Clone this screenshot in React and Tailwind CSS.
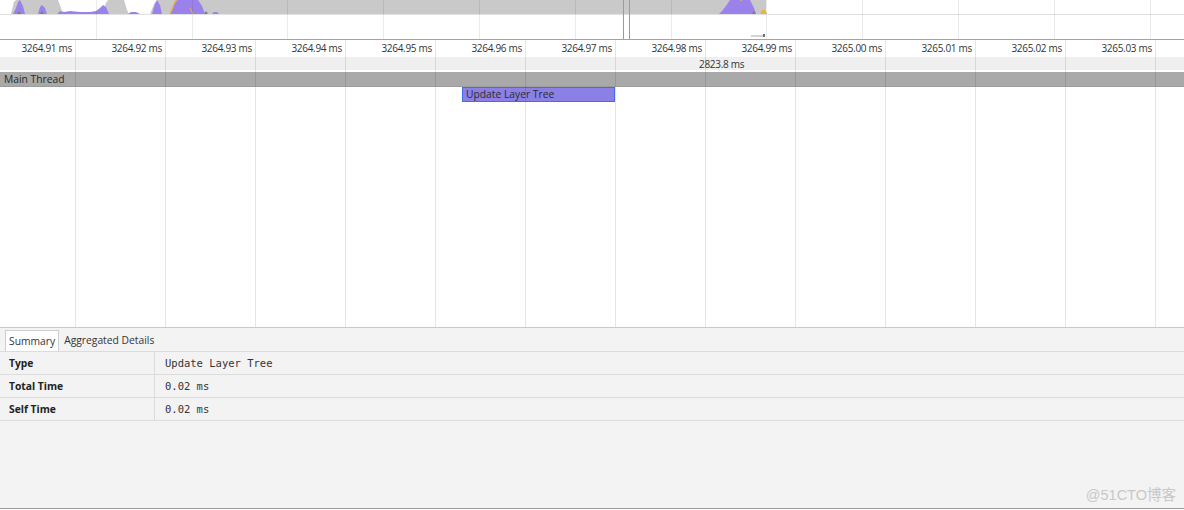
import React from "react";

const rulerLabels = [
  "3264.91 ms", "3264.92 ms", "3264.93 ms", "3264.94 ms", "3264.95 ms",
  "3264.96 ms", "3264.97 ms", "3264.98 ms", "3264.99 ms", "3265.00 ms",
  "3265.01 ms", "3265.02 ms", "3265.03 ms",
];

function Overview() {
  const ov = [];
  for (let k = 1; k <= 12; k++) ov.push(95.8 * k);
  return (
    <svg width="1184" height="39" viewBox="0 0 1184 39" className="block">
      <rect x="0" y="0" width="1184" height="39" fill="#ffffff" />
      {/* grey cpu area */}
      <path d="M11 14 L14 2 L16 0 L58 0 L61 8 L63 14 Z" fill="#c9c9c9" />
      <path d="M102 14 L106 3 L108 0 L124 0 L127 10 L129 14 Z" fill="#c9c9c9" />
      <path d="M150 14 L154 4 L157 0 L766 0 L766 14 Z" fill="#c9c9c9" />
      {/* purple peaks */}
      <path d="M13 14 L16 8 L18 2 L20 0 L23 6 L25 14 Z" fill="#9b82ea" />
      <path d="M38 14 L40 7 L42 5 L45 8 L47 14 Z" fill="#9b82ea" />
      <path d="M57 14 L60 11 L64 12 L70 11 L80 12 L90 12 L96 11 L100 8 L103 5 L106 7 L109 14 Z" fill="#9b82ea" />
      <path d="M128 14 L131 12 L136 12 L140 14 Z" fill="#9b82ea" />
      <path d="M152 14 L155 4 L157 0 L160 5 L162 14 Z" fill="#9b82ea" />
      <path d="M170 14 L173 6 L176 0 L198 0 L202 6 L205 14 Z" fill="#9b82ea" />
      <path d="M212 14 L214 12 L217 12 L219 14 Z" fill="#9b82ea" />
      <path d="M719 14 L722 11 L726 6 L730 0 L750 0 L754 8 L756 14 Z" fill="#9b82ea" />
      {/* orange traces */}
      <path d="M170 14 L176 0" stroke="#e8b43c" strokeWidth="1.2" fill="none" />
      <path d="M174 3 L178 0" stroke="#e8b43c" strokeWidth="1" fill="none" />
      <path d="M190 8 L193 14" stroke="#e8b43c" strokeWidth="1" fill="none" />
      <path d="M740 0 L742 1" stroke="#e8b43c" strokeWidth="1" fill="none" />
      <path d="M760 14 L762 10 L765 10 L767 14 Z" fill="#e8b43c" />
      {/* dark ticks at peaks */}
      <path d="M17 14 L19 11 L21 14 Z" fill="#7d7d7d" />
      <path d="M40 14 L42 11 L44 14 Z" fill="#7d7d7d" />
      <path d="M204 14 L206 11 L208 14 Z" fill="#7d7d7d" />
      <path d="M752 14 L754 11 L756 14 Z" fill="#7d7d7d" />
      {/* baseline */}
      <rect x="0" y="14" width="1184" height="1" fill="#e2e2e2" />
      {/* overview grid */}
      {ov.map((x) => (
        <rect key={x} x={Math.round(x)} y="0" width="1" height="39" fill="#000" fillOpacity="0.08" />
      ))}
      {/* selection window edges */}
      <rect x="623" y="0" width="1" height="39" fill="#9a9a9a" />
      <rect x="629" y="0" width="1" height="39" fill="#9a9a9a" />
      {/* resize handle */}
      <rect x="751" y="35" width="12" height="2" fill="#d4d4d4" />
      <rect x="763" y="34" width="2" height="3" fill="#6e6e6e" />
    </svg>
  );
}

function Timeline() {
  const lines = [];
  for (let i = 0; i < 13; i++) lines.push(75 + 90 * i);
  return (
    <div className="relative h-[287px] shrink-0 bg-white">
      {/* ruler */}
      <div className="flex h-[17px] items-center pb-[1px] text-[10px] tracking-[-0.3px] leading-none text-[#333]">
        {rulerLabels.map((l, i) => (
          <div
            key={l}
            className={
              (i === 0 ? "w-[75px]" : "w-[90px]") +
              " shrink-0 text-right pr-[3px] whitespace-nowrap"
            }
          >
            {l}
          </div>
        ))}
      </div>
      {/* duration row */}
      <div className="h-[13px] bg-[#efefef] flex items-center text-[10px] tracking-[-0.3px] leading-none text-[#333]">
        <span className="ml-[699px]">2823.8 ms</span>
      </div>
      <div className="h-[2px]" />
      {/* main thread header */}
      <div className="h-[15px] bg-[#a9a9a9] border-b border-[#9c9c9c] flex items-center pl-[4px] text-[10.3px] leading-none text-[#2a2a2a]">
        Main Thread
      </div>
      {/* flame area */}
      <div>
        <div className="ml-[462px] w-[153px] h-[15px] bg-[#8b80e6] border border-[#3f6fe0] flex items-center pl-[3px] text-[10.3px] leading-none text-[#2b2b2b] whitespace-nowrap">
          Update Layer Tree
        </div>
      </div>
      {/* grid lines */}
      {lines.map((x) => (
        <div
          key={x}
          className="absolute top-0 bottom-0 w-px bg-black/10 pointer-events-none"
          style={{ left: x }}
        />
      ))}
    </div>
  );
}

function Row({ label, value }) {
  return (
    <div className="flex h-[23px] border-b border-[#dcdcdc]">
      <div className="w-[155px] shrink-0 border-r border-[#dcdcdc] pl-[9px] pt-[1px] flex items-center text-[10.3px] font-bold text-[#222]">
        {label}
      </div>
      <div className="pl-[10px] pt-[1px] flex items-center text-[10.5px] text-[#333] font-['DejaVu_Sans_Mono',monospace]">
        {value}
      </div>
    </div>
  );
}

function BottomPanel() {
  return (
    <div className="relative h-[182px] shrink-0 bg-[#f3f3f3] border-t border-[#c8c8c8] border-b border-b-[#9a9a9a]">
      <div className="flex items-end h-[24px] px-[5px] border-b border-[#dcdcdc] text-[10.3px] text-[#333]">
        <div className="h-[21px] px-[3px] pt-[1px] bg-white border border-[#cfcfcf] border-b-0 flex items-center">
          Summary
        </div>
        <div className="h-[21px] px-[5px] pt-[1px] flex items-center">Aggregated Details</div>
      </div>
      <Row label="Type" value="Update Layer Tree" />
      <Row label="Total Time" value="0.02 ms" />
      <Row label="Self Time" value="0.02 ms" />
      <div className="absolute right-[8px] bottom-[6px] text-[14.5px] leading-none text-[#c8c8c8] font-['Liberation_Sans','Noto_Sans_CJK_SC',sans-serif]">
        @51CTO博客
      </div>
    </div>
  );
}

export default function App() {
  return (
    <div className="w-[1184px] h-[510px] overflow-hidden bg-white flex flex-col font-['Open_Sans',sans-serif]">
      <div className="h-[40px] shrink-0 border-b border-[#a3a3a3]">
        <Overview />
      </div>
      <Timeline />
      <BottomPanel />
      <div className="h-[1px] bg-white" />
    </div>
  );
}
